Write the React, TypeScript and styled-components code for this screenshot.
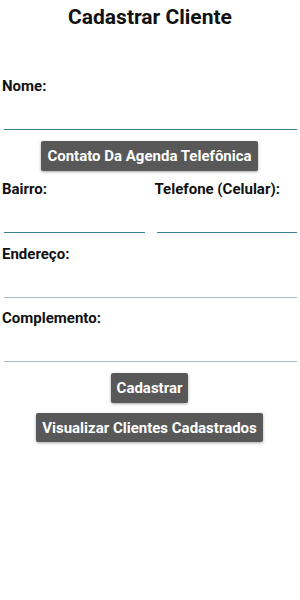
import React, { FC } from "react";
import styled, { createGlobalStyle } from "styled-components";

const GlobalStyle = createGlobalStyle`
  html, body {
    margin: 0;
    padding: 0;
    background: #fff;
    font-family: Roboto, "Noto Sans", "Liberation Sans", sans-serif;
  }
`;

const Screen = styled.div`
  width: 300px;
  min-height: 600px;
  box-sizing: border-box;
  padding: 4px 3px 0 2px;
  display: flex;
  flex-direction: column;
`;

const Title = styled.h1`
  margin: 0;
  font-size: 21px;
  line-height: 26px;
  font-weight: 700;
  color: #111;
  text-align: center;
  padding-left: 1px;
`;

const Form = styled.div`
  margin-top: 48px;
  display: flex;
  flex-direction: column;
`;

const Field = styled.div<{ $gap?: number }>`
  display: flex;
  flex-direction: column;
  margin-bottom: ${(p) => p.$gap ?? 13}px;
  min-width: 0;
`;

const Label = styled.label`
  font-size: 15px;
  line-height: 16px;
  font-weight: 700;
  color: #111;
  white-space: nowrap;
`;

const Input = styled.div<{ $faded?: boolean }>`
  height: 35px;
  margin: 0 0 0 2px;
  border-bottom: 1px solid ${(p) => (p.$faded ? "#a9c2c6" : "#3a808a")};
`;

const Columns = styled.div`
  display: grid;
  grid-template-columns: 1fr 1fr;
  column-gap: 10px;
  margin-top: 10px;
`;

const ButtonRow = styled.div<{ $top: number }>`
  display: flex;
  justify-content: center;
  margin-top: ${(p) => p.$top}px;
`;

const Button = styled.button<{ $h?: number }>`
  height: ${(p) => p.$h ?? 30}px;
  padding: 0 6px;
  border: none;
  border-radius: 2px;
  background: #585858;
  color: #fff;
  font-family: Roboto, "Noto Sans", "Liberation Sans", sans-serif;
  font-size: 15px;
  font-weight: 700;
  box-shadow: 0 1px 3px rgba(0, 0, 0, 0.35);
  cursor: pointer;
`;

const App: FC = () => {
  return (
    <>
      <GlobalStyle />
      <Screen>
        <Title>Cadastrar Cliente</Title>
        <Form>
          <Field $gap={0}>
            <Label>Nome:</Label>
            <Input />
          </Field>
          <ButtonRow $top={11}>
            <Button>Contato Da Agenda Telefônica</Button>
          </ButtonRow>
          <Columns>
            <Field>
              <Label>Bairro:</Label>
              <Input />
            </Field>
            <Field>
              <Label>Telefone (Celular):</Label>
              <Input />
            </Field>
          </Columns>
          <Field $gap={12}>
            <Label>Endereço:</Label>
            <Input $faded />
          </Field>
          <Field $gap={0}>
            <Label>Complemento:</Label>
            <Input $faded />
          </Field>
          <ButtonRow $top={11}>
            <Button>Cadastrar</Button>
          </ButtonRow>
          <ButtonRow $top={10}>
            <Button $h={29}>Visualizar Clientes Cadastrados</Button>
          </ButtonRow>
        </Form>
      </Screen>
    </>
  );
};

export default App;
